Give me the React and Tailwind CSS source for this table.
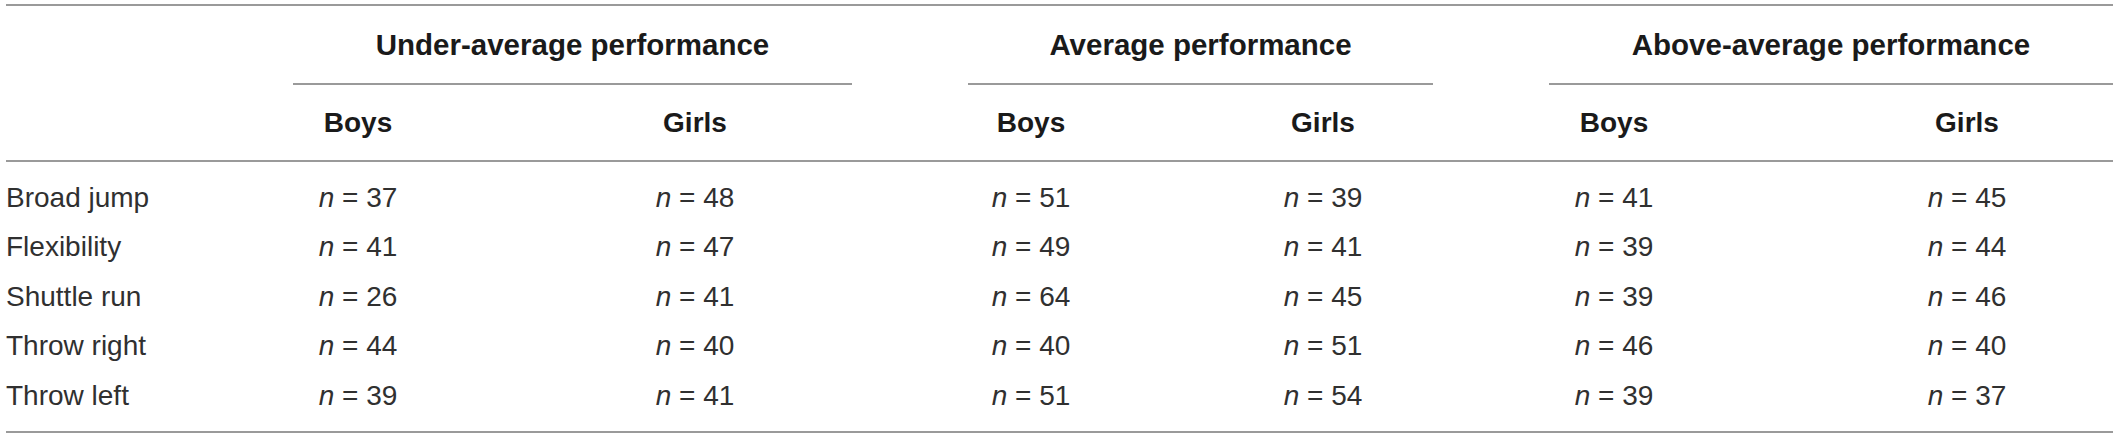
import React from 'react';

// Group sizes of the sample, by performance level and sex
const groups = [
  { title: 'Under-average performance', width: 'w-[559px]' },
  { title: 'Average performance', width: 'w-[465px]' },
  { title: 'Above-average performance', width: 'w-[564px]' },
];

const rows = [
  { test: 'Broad jump', values: [37, 48, 51, 39, 41, 45] },
  { test: 'Flexibility', values: [41, 47, 49, 41, 39, 44] },
  { test: 'Shuttle run', values: [26, 41, 64, 45, 39, 46] },
  { test: 'Throw right', values: [44, 40, 40, 51, 46, 40] },
  { test: 'Throw left', values: [39, 41, 51, 54, 39, 37] },
];

const cols = 'grid grid-cols-[143px_418px_256px_416px_168px_414px_292px]';

function Count({ value }) {
  return (
    <span className="whitespace-nowrap">
      <span className="italic">n</span> = {value}
    </span>
  );
}

export default function App() {
  return (
    <div className="w-[2118px] h-[436px] bg-white pt-[4px] px-[6px] font-['Liberation_Sans',Arial,sans-serif] text-[28px] leading-none text-[#303030]">
      <div className="w-[2107px] border-t-2 border-[#9a9a9a]">
        {/* Group headers */}
        <div className="flex pl-[287px] gap-[116px]">
          {groups.map((g) => (
            <div
              key={g.title}
              className={`${g.width} h-[79px] flex items-center justify-center border-b-2 border-[#9a9a9a] text-[29.5px] font-bold text-[#1a1a1a]`}
            >
              {g.title}
            </div>
          ))}
        </div>

        {/* Sex sub-headers */}
        <div className={`${cols} h-[77px] items-center border-b-2 border-[#9a9a9a] font-bold text-[#1a1a1a]`}>
          <div />
          {['Boys', 'Girls', 'Boys', 'Girls', 'Boys', 'Girls'].map((s, i) => (
            <div key={i} className="text-center">{s}</div>
          ))}
        </div>

        {/* Body */}
        <div className="pt-[11px] pb-[10px] border-b-2 border-[#9a9a9a]">
          {rows.map((r) => (
            <div key={r.test} className={`${cols} h-[49.5px] items-center`}>
              <div className="whitespace-nowrap">{r.test}</div>
              {r.values.map((v, i) => (
                <div key={i} className="text-center">
                  <Count value={v} />
                </div>
              ))}
            </div>
          ))}
        </div>
      </div>
    </div>
  );
}
